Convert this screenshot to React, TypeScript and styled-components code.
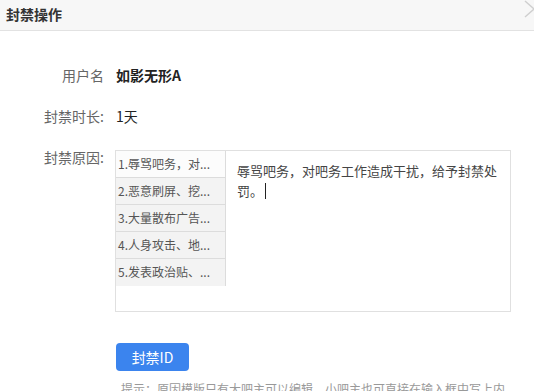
import styled, { createGlobalStyle } from "styled-components";

const GlobalStyle = createGlobalStyle`
  body {
    margin: 0;
    background: #fff;
    font-family: "Noto Sans CJK SC", "Liberation Sans", sans-serif;
  }
`;

const reasons = [
  "1.辱骂吧务，对...",
  "2.恶意刷屏、挖...",
  "3.大量散布广告...",
  "4.人身攻击、地...",
  "5.发表政治贴、...",
];

function BanDialog() {
  return (
    <>
      <GlobalStyle />
      <Dialog>
        <Header>
          <Title>封禁操作</Title>
          <CloseIcon width="20" height="20" viewBox="0 0 20 20">
            <polyline points="4,2 13,10 4,18" fill="none" stroke="#cfcfcf" strokeWidth="1.4" />
          </CloseIcon>
        </Header>
        <Form>
          <Label>用户名</Label>
          <Value $bold>如影无形A</Value>
          <Label>封禁时长:</Label>
          <Value>1天</Value>
          <Label>封禁原因:</Label>
          <ReasonBox>
            <TemplateList>
              {reasons.map((r, i) => (
                <TemplateItem key={r} $active={i === 0}>
                  {r}
                </TemplateItem>
              ))}
            </TemplateList>
            <ReasonText>
              辱骂吧务，对吧务工作造成干扰，给予封禁处罚。<Caret />
            </ReasonText>
          </ReasonBox>
          <span />
          <Actions>
            <BanButton>封禁ID</BanButton>
            <Hint>提示：原因模版只有大吧主可以编辑，小吧主也可直接在输入框中写上内容</Hint>
          </Actions>
        </Form>
      </Dialog>
    </>
  );
}

const Dialog = styled.div`
  width: 534px;
  height: 391px;
  overflow: hidden;
`;

const Header = styled.div`
  height: 31px;
  box-sizing: border-box;
  background: #f7f7f7;
  border-bottom: 1px solid #e2e2e2;
  display: flex;
  align-items: center;
  justify-content: space-between;
  padding-left: 6px;
`;

const Title = styled.h3`
  margin: -2px 0 0;
  font-size: 14px;
  font-weight: bold;
  color: #333;
  line-height: 26px;
`;

const CloseIcon = styled.svg`
  margin-right: -7px;
  margin-top: -12px;
`;

const Form = styled.div`
  display: grid;
  grid-template-columns: 104px 1fr;
  column-gap: 12px;
  row-gap: 21px;
  padding-top: 34px;
`;

const Label = styled.div`
  text-align: right;
  font-size: 14px;
  line-height: 20px;
  color: #666;
`;

const Value = styled.div<{ $bold?: boolean }>`
  font-size: 14px;
  line-height: 20px;
  color: #222;
  font-weight: ${(p) => (p.$bold ? "bold" : "normal")};
`;

const ReasonBox = styled.div`
  margin-top: 3px;
  margin-left: -1px;
  width: 396px;
  height: 162px;
  box-sizing: border-box;
  border: 1px solid #e0e0e0;
  display: flex;
`;

const TemplateList = styled.div`
  width: 110px;
  display: flex;
  flex-direction: column;
`;

const TemplateItem = styled.div<{ $active?: boolean }>`
  height: 27px;
  box-sizing: border-box;
  padding-left: 2px;
  font-size: 12px;
  line-height: 26px;
  color: #555;
  white-space: nowrap;
  overflow: hidden;
  background: ${(p) => (p.$active ? "#fcfcfc" : "#f3f3f3")};
  border-bottom: 1px solid #dcdcdc;
  border-right: 1px solid #dcdcdc;
  &:last-child {
    border-bottom: none;
  }
`;

const ReasonText = styled.div`
  flex: 1;
  padding: 10px 6px 0 11px;
  font-size: 13px;
  line-height: 20px;
  color: #444;
`;

const Caret = styled.span`
  display: inline-block;
  width: 1px;
  height: 16px;
  background: #222;
  vertical-align: -3px;
  margin-left: 2px;
`;

const Actions = styled.div`
  margin-top: 10px;
  display: flex;
  flex-direction: column;
  align-items: flex-start;
  gap: 9px;
`;

const BanButton = styled.button`
  width: 73px;
  height: 28px;
  border: none;
  border-radius: 4px;
  background: #3b84ee;
  color: #fff;
  font-family: inherit;
  font-size: 14px;
  padding: 0;
`;

const Hint = styled.p`
  margin: 0 0 0 5px;
  width: 390px;
  font-size: 12px;
  line-height: 18px;
  color: #999;
`;

export default BanDialog;
